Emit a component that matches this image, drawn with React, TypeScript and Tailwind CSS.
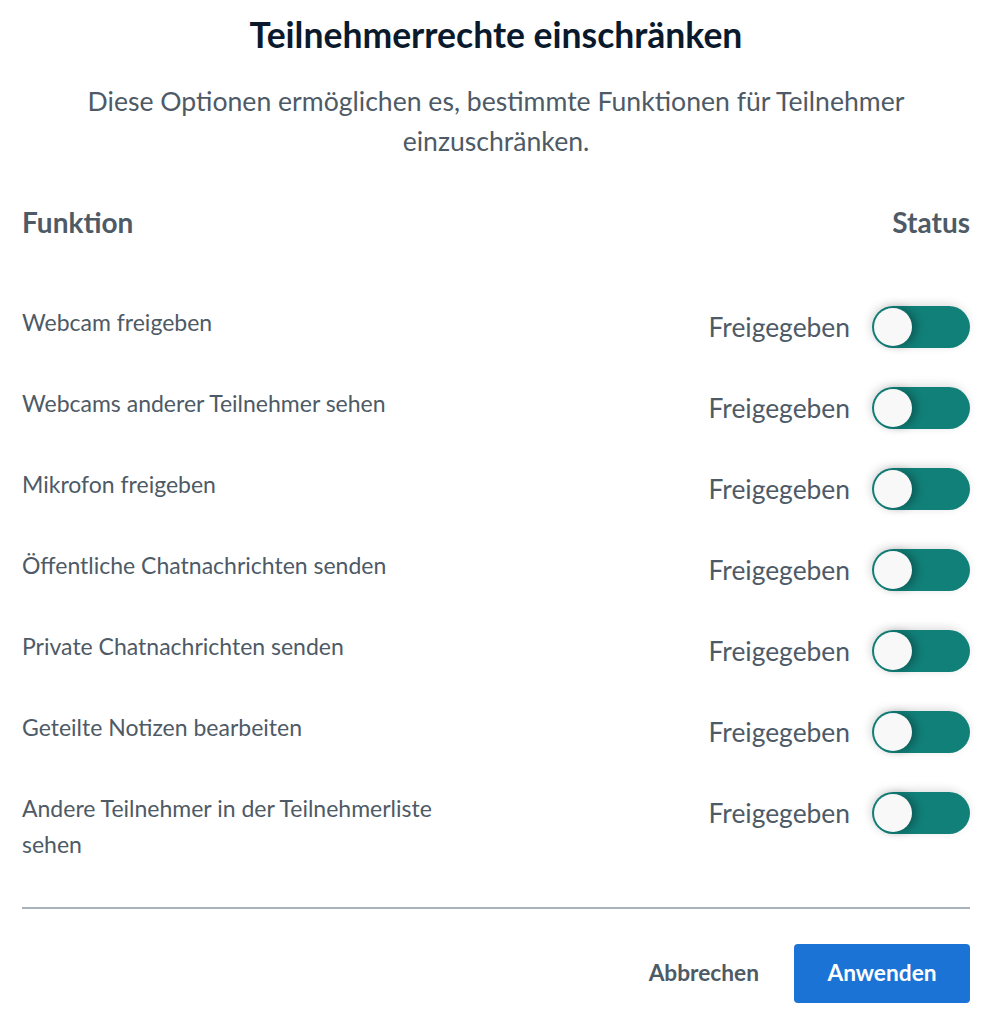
import React from 'react'

const rows = [
  'Webcam freigeben',
  'Webcams anderer Teilnehmer sehen',
  'Mikrofon freigeben',
  'Öffentliche Chatnachrichten senden',
  'Private Chatnachrichten senden',
  'Geteilte Notizen bearbeiten',
  'Andere Teilnehmer in der Teilnehmerliste sehen',
]

function Toggle() {
  return (
    <div className="w-[98px] h-[42px] rounded-full bg-[#118079] p-[2px] flex items-center shadow-[-2px_-2px_10px_rgba(0,0,0,0.14)]">
      <div className="w-[38px] h-[38px] rounded-full bg-[#f8f8f8] shadow-[5px_0_8px_rgba(0,0,0,0.28)]"></div>
    </div>
  )
}

export default function App() {
  return (
    <div className="w-[1004px] h-[1014px] bg-white pl-[22px] pr-[34px] font-['Lato',sans-serif] text-[#4e5a66]">
      <h1 className="pt-[15px] text-center text-[35.5px] leading-[40px] font-bold text-[#0a1a2c]">
        Teilnehmerrechte einschränken
      </h1>
      <p className="mt-[26px] mx-auto w-[900px] text-center text-[26.6px] leading-[40px]">
        Diese Optionen ermöglichen es, bestimmte Funktionen für Teilnehmer einzuschränken.
      </p>
      <div className="mt-[46px] flex justify-between text-[28px] leading-[30px] font-bold">
        <span>Funktion</span>
        <span>Status</span>
      </div>
      <div className="mt-[69px] flex flex-col gap-[39px]">
        {rows.map((label) => (
          <div key={label} className="flex items-start justify-between">
            <div className="w-[450px] text-[23px] leading-[36px] -mt-[2px]">{label}</div>
            <div className="flex items-center gap-[22px]">
              <span className="text-[26.4px] leading-[30px]">Freigegeben</span>
              <Toggle />
            </div>
          </div>
        ))}
      </div>
      <div className="mt-[45px] h-[2px] bg-[#a9b1b9]"></div>
      <div className="mt-[35px] flex justify-end items-center gap-[35px]">
        <button className="text-[22.7px] font-bold text-[#4e5a66]">Abbrechen</button>
        <button className="w-[176px] h-[59px] rounded-[4px] bg-[#1b73d5] text-white text-[22.7px] font-bold">
          Anwenden
        </button>
      </div>
    </div>
  )
}
